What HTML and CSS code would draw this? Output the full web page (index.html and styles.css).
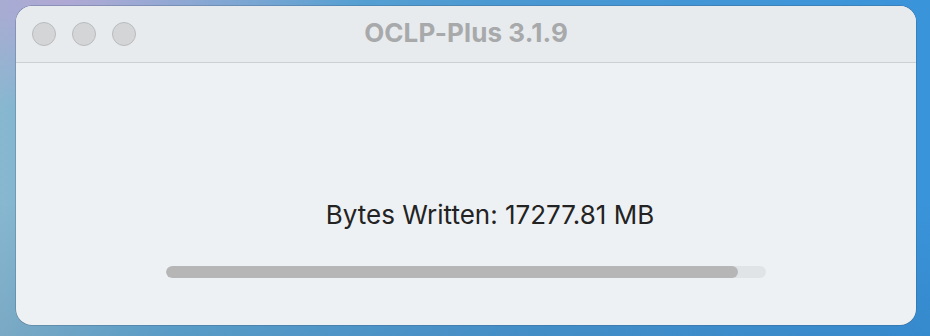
FILE: index.html
```html
<!DOCTYPE html>
<html lang="en">
<head>
<meta charset="utf-8">
<title>OCLP-Plus 3.1.9</title>
<link rel="stylesheet" href="styles.css">
</head>
<body>
<div class="desktop">
  <div class="window">
    <header class="titlebar">
      <div class="lights">
        <span class="light"></span>
        <span class="light"></span>
        <span class="light"></span>
      </div>
      <div class="title">OCLP-Plus 3.1.9</div>
    </header>
    <main class="content">
      <div class="status">Bytes Written: 17277.81 MB</div>
      <div class="progress"><div class="fill" style="width: 95.3%"></div></div>
    </main>
  </div>
</div>
</body>
</html>
```
FILE: styles.css
```css
* { box-sizing: border-box; }
html, body { margin: 0; padding: 0; }
body {
  width: 930px;
  height: 336px;
  overflow: hidden;
  font-family: Inter, "Noto Sans", "Liberation Sans", sans-serif;
}
.desktop {
  width: 930px;
  height: 336px;
  padding: 6px 14px 11px 16px;
  background:
    radial-gradient(ellipse 300px 110px at 60px 0px, rgba(178,168,212,0.95), rgba(178,168,212,0) 100%),
    linear-gradient(180deg, rgba(255,255,255,0) 60%, rgba(20,60,110,0.12) 100%),
    linear-gradient(90deg, #88b8d0 0%, #62a8d2 18%, #4a98d2 55%, #3a94da 100%);
}
.window {
  width: 900px;
  height: 319px;
  border-radius: 16px;
  background: #eef1f4;
  overflow: hidden;
  display: flex;
  flex-direction: column;
  box-shadow: 0 0 0 0.5px rgba(60,80,110,0.55);
}
.titlebar {
  height: 57px;
  flex: none;
  background: #e8ebee;
  border-bottom: 1px solid #cdd0d3;
  display: flex;
  align-items: center;
  position: relative;
  padding-left: 16px;
}
.lights {
  display: flex;
  gap: 16px;
  position: relative;
  z-index: 1;
}
.light {
  width: 24px;
  height: 24px;
  border-radius: 50%;
  background: #d3d5d7;
  border: 1px solid #b9bbbd;
}
.title {
  position: absolute;
  left: 0;
  right: 0;
  top: 0;
  bottom: 0;
  display: flex;
  align-items: center;
  justify-content: center;
  font-weight: 700;
  font-size: 26px;
  letter-spacing: 0.1px;
  color: #a7a9ab;
  padding-bottom: 3px;
}
.content {
  flex: 1;
  display: flex;
  flex-direction: column;
  align-items: center;
  padding-top: 137px;
}
.status {
  font-size: 26px;
  color: #232323;
  line-height: 30px;
  margin-left: 48px;
}
.progress {
  margin-top: 36px;
  width: 600px;
  height: 12px;
  border-radius: 6px;
  background: #e1e4e7;
  overflow: hidden;
}
.fill {
  height: 100%;
  background: #b6b6b6;
  border-radius: 6px;
}
```
